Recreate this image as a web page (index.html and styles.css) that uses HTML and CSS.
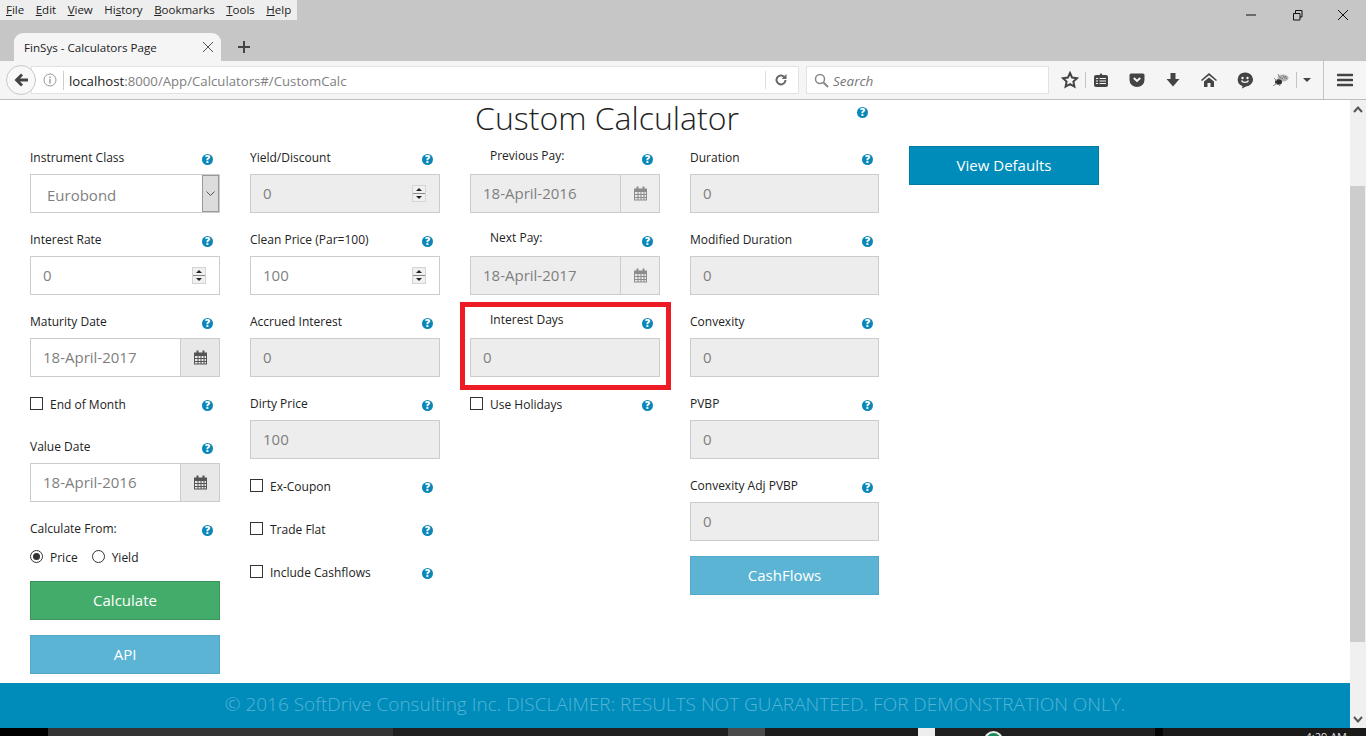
FILE: index.html
```html
<!DOCTYPE html>
<html lang="en">
<head>
    <meta charset="UTF-8">
    <title>FinSys - Calculators Page</title>
    <link rel="stylesheet" href="styles.css">
</head>
<body>
    <div class="browser">
        <div class="titlebar">
            <ul class="menubar">
                <li><u>F</u>ile</li>
                <li><u>E</u>dit</li>
                <li><u>V</u>iew</li>
                <li>Hi<u>s</u>tory</li>
                <li><u>B</u>ookmarks</li>
                <li><u>T</u>ools</li>
                <li><u>H</u>elp</li>
            </ul>
            <div class="winctl">
                <svg width="14" height="14" viewBox="0 0 14 14"><path d="M2 7h10" stroke="#111" fill="none"/></svg>
                <svg width="14" height="14" viewBox="0 0 14 14"><path d="M3.500 5.500h6.500v6.500h-6.500zM5.500 5v-2.500h6.500v6.500h-2" stroke="#111" fill="none"/></svg>
                <svg width="14" height="14" viewBox="0 0 14 14"><path d="M2 2l10 10M12 2l-10 10" stroke="#111" fill="none"/></svg>
            </div>
        </div>
        <div class="tabstrip">
            <div class="tab">
                <span class="tab-title">FinSys - Calculators Page</span>
                <svg width="12" height="12" viewBox="0 0 12 12"><path d="M1 1l10 10M11 1l-10 10" stroke="#555" fill="none"/></svg>
            </div>
            <svg class="newtab" width="14" height="14" viewBox="0 0 14 14"><path d="M7 1v12M1 7h12" stroke="#444" stroke-width="2" fill="none"/></svg>
        </div>
        <div class="navbar">
            <div class="backbtn">
                <svg width="16" height="16" viewBox="0 0 16 16"><path d="M8 1.500l-6.500 6.500 6.500 6.500 2-2-3-3h8v-3h-8l3-3z" fill="#444"/></svg>
            </div>
            <div class="urlbar">
                <svg class="infoicon" width="14" height="14" viewBox="0 0 14 14"><circle cx="7" cy="7" r="6" stroke="#999" fill="none"/><path d="M7 6v4.500M7 3.500v1.500" stroke="#999" stroke-width="1.400"/></svg>
                <span class="url"><span class="url-host">localhost</span>:8000/App/Calculators#/CustomCalc</span>
                <span class="url-sep"></span>
                <svg class="reload" width="14" height="14" viewBox="0 0 14 14"><path d="M11.500 7a4.500 4.500 0 1 1-1.400-3.300" stroke="#666" stroke-width="2" fill="none"/><path d="M12.500 1v5h-5z" fill="#666"/></svg>
            </div>
            <div class="searchbar">
                <svg width="15" height="15" viewBox="0 0 15 15"><circle cx="6" cy="6" r="4.500" stroke="#888" stroke-width="1.500" fill="none"/><path d="M9.500 9.500l4.500 4.500" stroke="#888" stroke-width="2"/></svg>
                <span>Search</span>
            </div>
            <div class="tools">
                <svg class="t-star" width="18" height="18" viewBox="0 0 18 18"><path d="M9 2l2.100 4.600 5 .6-3.700 3.400 1 5-4.400-2.500-4.400 2.500 1-5-3.700-3.400 5-.6z" stroke="#444" stroke-width="2" fill="none"/></svg>
                <span class="t-sep"></span>
                <svg class="t-list" width="16" height="16" viewBox="0 0 16 16"><path d="M3 3h3.500l1.500-2 1.500 2h3.500a2 2 0 0 1 2 2v8a2 2 0 0 1-2 2h-10a2 2 0 0 1-2-2v-8a2 2 0 0 1 2-2z" fill="#444"/><path d="M3 6.500h2M6.500 6.500h6.500M3 9h2M6.500 9h6.500M3 11.500h2M6.500 11.500h6.500" stroke="#f5f5f5" stroke-width="1.200"/></svg>
                <svg class="t-pocket" width="16" height="16" viewBox="0 0 16 16"><path d="M2 1.500h12a1.500 1.500 0 0 1 1.500 1.500v5a7.500 7 0 0 1-15 0v-5a1.500 1.500 0 0 1 1.500-1.500z" fill="#444"/><path d="M4.800 6l3.200 3 3.200-3" stroke="#f5f5f5" stroke-width="2" fill="none"/></svg>
                <svg class="t-down" width="16" height="16" viewBox="0 0 16 16"><path d="M5.500 1h5v6h4l-6.500 7.500-6.500-7.500h4z" fill="#444"/></svg>
                <svg class="t-home" width="16" height="16" viewBox="0 0 16 16"><path d="M8 1l8 7-1 1-7-5.700-7 5.700-1-1z" fill="#444"/><path d="M3 9.500l5-4 5 4v5.500h-3.500v-4h-3v4h-3.500z" fill="#444"/></svg>
                <svg class="t-smile" width="16" height="17" viewBox="0 0 16 17"><path d="M8 .5a7.500 7 0 0 1 1 14l-4 2 .5-2.500a7.500 7 0 0 1 2.500-13.500z" fill="#444"/><circle cx="5.500" cy="6" r="1.200" fill="#f5f5f5"/><circle cx="10.500" cy="6" r="1.200" fill="#f5f5f5"/><path d="M4.500 8.500c1 2.500 6 2.500 7 0" stroke="#f5f5f5" stroke-width="1.400" fill="none"/></svg>
                <svg class="t-bug" width="18" height="16" viewBox="0 0 18 16"><ellipse cx="11" cy="6" rx="5.500" ry="3.500" fill="#b5b5b5"/><path d="M8 5l3 2M11 3.500l2 3M13.500 4l1 3" stroke="#777" fill="none"/><ellipse cx="6.500" cy="10" rx="3.500" ry="2.800" fill="#2f2f2f"/><path d="M1 14l4-3M2 6l3 3M8 14l-1-2M6 2l2 4" stroke="#888" fill="none"/></svg>
                <span class="t-sep t-sep-b"></span>
                <svg class="t-caret" width="8" height="4" viewBox="0 0 8 4"><path d="M0 0h8l-4 4z" fill="#444"/></svg>
                <span class="t-sep t-sep-c"></span>
                <svg class="t-menu" width="16" height="14" viewBox="0 0 16 14"><path d="M1 2h14M1 7h14M1 12h14" stroke="#444" stroke-width="2.600" stroke-linecap="round"/></svg>
            </div>
        </div>
    </div>

    <div class="viewport">
        <div class="page">
            <div class="heading">
                <h1>Custom Calculator</h1>
                <span class="help help-title">?</span>
            </div>
            <div class="calc-grid">
                <div class="calc-col">
                    <div class="field">
                        <div class="field-label"><label>Instrument Class</label><span class="help">?</span></div>
                        <div class="select">
                            <span class="select-value">Eurobond</span>
                            <span class="select-btn"><svg width="9" height="5" viewBox="0 0 9 5"><path d="M.5 .5l4 4 4-4" stroke="#555" fill="none"/></svg></span>
                        </div>
                    </div>
                    <div class="field">
                        <div class="field-label"><label>Interest Rate</label><span class="help">?</span></div>
                        <div class="input"><span>0</span><span class="spin"><i class="spin-up"></i><i class="spin-down"></i></span></div>
                    </div>
                    <div class="field">
                        <div class="field-label"><label>Maturity Date</label><span class="help">?</span></div>
                        <div class="date">
                            <div class="date-value">18-April-2017</div>
                            <div class="date-btn"><svg class="cal" width="15" height="15" viewBox="0 0 15 15"><use href="#cal"/></svg></div>
                        </div>
                    </div>
                    <div class="check-row"><span class="box"></span><label>End of Month</label><span class="help">?</span></div>
                    <div class="field">
                        <div class="field-label"><label>Value Date</label><span class="help">?</span></div>
                        <div class="date">
                            <div class="date-value">18-April-2016</div>
                            <div class="date-btn"><svg class="cal" width="15" height="15" viewBox="0 0 15 15"><use href="#cal"/></svg></div>
                        </div>
                    </div>
                    <div class="field-label"><label>Calculate From:</label><span class="help">?</span></div>
                    <div class="radio-row">
                        <span class="radio radio-on"></span><label>Price</label>
                        <span class="radio"></span><label>Yield</label>
                    </div>
                    <div class="btn btn-green">Calculate</div>
                    <div class="btn btn-info">API</div>
                </div>

                <div class="calc-col">
                    <div class="field">
                        <div class="field-label"><label>Yield/Discount</label><span class="help">?</span></div>
                        <div class="input input-off"><span>0</span><span class="spin"><i class="spin-up"></i><i class="spin-down"></i></span></div>
                    </div>
                    <div class="field">
                        <div class="field-label"><label>Clean Price (Par=100)</label><span class="help">?</span></div>
                        <div class="input"><span>100</span><span class="spin"><i class="spin-up"></i><i class="spin-down"></i></span></div>
                    </div>
                    <div class="field">
                        <div class="field-label"><label>Accrued Interest</label><span class="help">?</span></div>
                        <div class="input input-off"><span>0</span></div>
                    </div>
                    <div class="field">
                        <div class="field-label"><label>Dirty Price</label><span class="help">?</span></div>
                        <div class="input input-off"><span>100</span></div>
                    </div>
                    <div class="check-row"><span class="box"></span><label>Ex-Coupon</label><span class="help">?</span></div>
                    <div class="check-row"><span class="box"></span><label>Trade Flat</label><span class="help">?</span></div>
                    <div class="check-row"><span class="box"></span><label>Include Cashflows</label><span class="help">?</span></div>
                </div>

                <div class="calc-col">
                    <div class="field">
                        <div class="field-label field-label-in"><label>Previous Pay:</label><span class="help">?</span></div>
                        <div class="date date-off">
                            <div class="date-value">18-April-2016</div>
                            <div class="date-btn"><svg class="cal" width="15" height="15" viewBox="0 0 15 15"><use href="#cal"/></svg></div>
                        </div>
                    </div>
                    <div class="field">
                        <div class="field-label field-label-in"><label>Next Pay:</label><span class="help">?</span></div>
                        <div class="date date-off">
                            <div class="date-value">18-April-2017</div>
                            <div class="date-btn"><svg class="cal" width="15" height="15" viewBox="0 0 15 15"><use href="#cal"/></svg></div>
                        </div>
                    </div>
                    <div class="field field-marked">
                        <div class="field-label field-label-in"><label>Interest Days</label><span class="help">?</span></div>
                        <div class="input input-off"><span>0</span></div>
                        <div class="marker"></div>
                    </div>
                    <div class="check-row"><span class="box"></span><label>Use Holidays</label><span class="help">?</span></div>
                </div>

                <div class="calc-col calc-col-narrow">
                    <div class="field">
                        <div class="field-label"><label>Duration</label><span class="help">?</span></div>
                        <div class="input input-off"><span>0</span></div>
                    </div>
                    <div class="field">
                        <div class="field-label"><label>Modified Duration</label><span class="help">?</span></div>
                        <div class="input input-off"><span>0</span></div>
                    </div>
                    <div class="field">
                        <div class="field-label"><label>Convexity</label><span class="help">?</span></div>
                        <div class="input input-off"><span>0</span></div>
                    </div>
                    <div class="field">
                        <div class="field-label"><label>PVBP</label><span class="help">?</span></div>
                        <div class="input input-off"><span>0</span></div>
                    </div>
                    <div class="field field-last">
                        <div class="field-label"><label>Convexity Adj PVBP</label><span class="help">?</span></div>
                        <div class="input input-off"><span>0</span></div>
                    </div>
                    <div class="btn btn-info">CashFlows</div>
                </div>

                <div class="calc-col">
                    <div class="btn btn-blue">View Defaults</div>
                </div>
            </div>
            <div class="footer">© 2016 SoftDrive Consulting Inc. DISCLAIMER: RESULTS NOT GUARANTEED. FOR DEMONSTRATION ONLY.</div>
        </div>
        <div class="scrollbar">
            <svg width="10" height="7" viewBox="0 0 10 7"><path d="M1 6l4-4.500 4 4.500" stroke="#555" stroke-width="2" fill="none"/></svg>
            <div class="scroll-thumb"></div>
            <svg width="10" height="7" viewBox="0 0 10 7"><path d="M1 1l4 4.500 4-4.500" stroke="#555" stroke-width="2" fill="none"/></svg>
        </div>
    </div>

    <div class="taskbar">
        <span class="task task-a"></span>
        <span class="task task-b"></span>
        <span class="task task-c"></span>
        <span class="task task-d"></span>
        <span class="task task-e"></span>
        <span class="task task-f"></span>
        <span class="task task-g"></span>
        <span class="task task-h"></span>
        <span class="task-dot"></span>
        <span class="task-time">4:29 AM</span>
    </div>

    <svg class="defs" width="0" height="0">
        <symbol id="cal" viewBox="0 0 15 15">
            <path d="M1 2.500h13v12h-13z" fill="currentColor"/>
            <path d="M2 6h2.500v2h-2.500zM5.500 6h2v2h-2zM8.500 6h2v2h-2zM11.500 6h1.500v2h-1.500zM2 9h2.500v2h-2.500zM5.500 9h2v2h-2zM8.500 9h2v2h-2zM11.500 9h1.500v2h-1.500zM2 12h2.500v1.500h-2.500zM5.500 12h2v1.500h-2zM8.500 12h2v1.500h-2zM11.500 12h1.500v1.500h-1.500z" fill="#e8e8e8"/>
            <path d="M3.500 .5h2v3h-2zM9.500 .5h2v3h-2z" fill="currentColor"/>
        </symbol>
    </svg>
</body>
</html>
```

FILE: styles.css
```css
* {
    box-sizing: border-box;
}
html, body {
    height: 100%;
}
body {
    margin: 0;
    height: 736px;
    overflow: hidden;
    font-family: "Open Sans", sans-serif;
    display: flex;
    flex-direction: column;
    background: #fff;
}

/* browser chrome */
.browser {
    flex: none;
}
.titlebar {
    height: 20px;
    background: #c6c6c6;
    display: flex;
    justify-content: space-between;
}
.menubar {
    list-style: none;
    margin: 0;
    padding: 0 3px 0 6px;
    width: 297px;
    background: #eeeeee;
    display: flex;
    gap: 11.5px;
    font-size: 11.5px;
    line-height: 20px;
    color: #222;
}
.winctl {
    display: flex;
    gap: 32px;
    padding: 8px 16px 0 0;
}
.tabstrip {
    height: 41px;
    background: #c6c6c6;
    display: flex;
    align-items: flex-end;
    padding-left: 14px;
}
.tab {
    width: 207px;
    height: 28px;
    background: #f5f5f5;
    border-radius: 9px 9px 0 0;
    padding: 0 7px 0 10px;
    display: flex;
    align-items: center;
    justify-content: space-between;
    font-size: 11.6px;
    color: #222;
}
.newtab {
    margin: 0 0 7px 16px;
}
.navbar {
    height: 39px;
    background: #f5f5f5;
    border-bottom: 1px solid #bdbdbd;
    display: flex;
    align-items: center;
    padding: 0 0 0 6px;
}
.backbtn {
    width: 30px;
    height: 30px;
    border: 1px solid #c8c8c8;
    border-radius: 50%;
    background: #f8f8f8;
    display: flex;
    align-items: center;
    justify-content: center;
    position: relative;
    z-index: 1;
}
.urlbar {
    width: 768px;
    height: 28px;
    margin-left: -5px;
    background: #fff;
    border: 1px solid #e2e2e2;
    display: flex;
    align-items: center;
    font-size: 13.2px;
    color: #808080;
    padding-left: 11px;
}
.infoicon {
    flex: none;
}
.url {
    margin-left: 6px;
    padding: 1px 0 0 5px;
    border-left: 1px solid #ccc;
    line-height: 18px;
    flex: 1;
}
.url-host {
    color: #222;
}
.url-sep {
    width: 1px;
    height: 18px;
    background: #ddd;
    margin-right: 8px;
}
.reload {
    margin-right: 10px;
}
.searchbar {
    width: 243px;
    height: 28px;
    margin-left: 7px;
    background: #fff;
    border: 1px solid #e2e2e2;
    display: flex;
    align-items: center;
    gap: 4px;
    padding: 1px 0 0 7px;
    font-size: 13.5px;
    font-style: italic;
    color: #777;
}
.tools {
    flex: 1;
    display: flex;
    align-items: center;
    height: 100%;
    padding-left: 12px;
}
.t-sep {
    width: 1px;
    height: 16px;
    background: #c4c4c4;
    margin-left: 6px;
}
.t-list {
    margin-left: 7px;
}
.t-pocket, .t-down, .t-home, .t-smile {
    margin-left: 20px;
}
.t-bug {
    margin-left: 19px;
}
.t-sep-b {
    margin-left: 6px;
}
.t-caret {
    margin-left: 6px;
}
.t-sep-c {
    height: 100%;
    margin-left: 12px;
}
.t-menu {
    margin-left: 13px;
}

/* page */
.viewport {
    height: 628px;
    flex: none;
    display: flex;
}
.page {
    flex: 1;
    display: flex;
    flex-direction: column;
    min-width: 0;
}
.heading {
    height: 45px;
    flex: none;
    position: relative;
    text-align: center;
}
.heading h1 {
    margin: 0;
    padding: 0 136px 0 0;
    font-size: 32px;
    font-weight: 300;
    line-height: 36px;
    color: #222;
}
.help-title {
    position: absolute;
    left: 857px;
    top: 7px;
}
.calc-grid {
    flex: 1;
    display: grid;
    grid-template-columns: 190px 190px 190px 189px 190px;
    column-gap: 30px;
    padding-left: 30px;
}
.calc-col {
    min-width: 0;
}
.field {
    height: 82px;
    position: relative;
}
.field-last {
    height: 83px;
}
.field-label {
    height: 29px;
    padding-top: 4px;
    display: flex;
    justify-content: space-between;
    font-size: 12px;
    line-height: 18px;
    color: #222;
    padding-right: 7px;
}
.calc-col-narrow .field-label {
    padding-right: 6px;
}
.field-label-in {
    padding-left: 20px;
    padding-top: 2px;
}
.field-label .help {
    margin-top: 5px;
}
.field-label-in .help {
    margin-top: 7px;
}
.help {
    flex: none;
    width: 11px;
    height: 11px;
    border-radius: 50%;
    background: #0a87b8;
    color: #fff;
    font-size: 10px;
    font-weight: 800;
    line-height: 11px;
    text-align: center;
    display: inline-block;
}
.input {
    height: 39px;
    border: 1px solid #cccccc;
    background: #fff;
    display: flex;
    align-items: center;
    justify-content: space-between;
    padding: 0 13px 0 12px;
    font-size: 15px;
    color: #7f7f7f;
}
.input > span:first-child {
    margin-bottom: 2px;
}
.input-off {
    background: #ededed;
}
.spin {
    width: 14px;
    height: 17px;
    background: #f0f0f0;
    border: 1px solid #d4d4d4;
    display: flex;
    flex-direction: column;
    align-items: center;
    justify-content: space-between;
    padding: 2px 0;
    position: relative;
}
.spin::after {
    content: "";
    position: absolute;
    left: 0;
    right: 0;
    top: 7px;
    height: 1px;
    background: #8a8a8a;
}
.spin-up {
    border: 3px solid transparent;
    border-top: 0;
    border-bottom: 3px solid #222;
}
.spin-down {
    border: 3px solid transparent;
    border-bottom: 0;
    border-top: 3px solid #222;
}
.select {
    height: 39px;
    border: 1px solid #cccccc;
    background: #fff;
    display: flex;
    align-items: center;
    justify-content: space-between;
    font-size: 15px;
    color: #7f7f7f;
    padding: 0 0 0 16px;
}
.select-value {
    padding-top: 3px;
}
.select-btn {
    width: 17px;
    height: 37px;
    background: #dcdcdc;
    border: 1px solid #999;
    display: flex;
    align-items: center;
    justify-content: center;
}
.date {
    height: 39px;
    display: flex;
}
.date-value {
    flex: 1;
    border: 1px solid #cccccc;
    border-right: 0;
    background: #fff;
    padding-left: 12px;
    font-size: 15px;
    line-height: 36px;
    color: #7f7f7f;
}
.date-off .date-value {
    background: #ededed;
}
.date-btn {
    width: 40px;
    border: 1px solid #cccccc;
    background: #e8e8e8;
    display: flex;
    align-items: center;
    justify-content: center;
    color: #555;
}
.date-off .date-btn {
    background: #eeeeee;
    color: #8c8c8c;
}
.check-row {
    height: 43px;
    padding: 5px 7px 0 0;
    display: flex;
    align-items: flex-start;
    font-size: 12px;
    line-height: 18px;
    color: #222;
}
.check-row label {
    flex: 1;
    margin-left: 7px;
}
.check-row .help {
    margin-top: 4px;
}
.box {
    width: 13px;
    height: 13px;
    margin-top: 1px;
    border: 1px solid #333;
    background: #fff;
}
.radio-row {
    height: 36px;
    padding-top: 4px;
    display: flex;
    align-items: flex-start;
    font-size: 12px;
    line-height: 18px;
    color: #222;
}
.radio-row label {
    margin: 0 14px 0 7px;
}
.radio {
    width: 13px;
    height: 13px;
    margin-top: 1px;
    border: 1px solid #333;
    border-radius: 50%;
    background: #fff;
    position: relative;
}
.radio-on::after {
    content: "";
    position: absolute;
    left: 2px;
    top: 2px;
    width: 7px;
    height: 7px;
    border-radius: 50%;
    background: #333;
}
.btn {
    height: 39px;
    margin-bottom: 15px;
    color: #fff;
    font-size: 15px;
    line-height: 37px;
    text-align: center;
    border: 1px solid transparent;
}
.calc-col .btn:last-child {
    margin-bottom: 0;
}
.btn-green {
    background: #43ac6a;
    border-color: #3a945b;
}
.btn-info {
    background: #5bb4d3;
    border-color: #51a8c7;
}
.btn-blue {
    background: #008cba;
    border-color: #007ba4;
    margin-top: 1px;
}
/* red box drawn over the screenshot */
.marker {
    position: absolute;
    left: -10px;
    top: -7px;
    width: 211px;
    height: 88px;
    border: 5px solid #ed1c24;
    pointer-events: none;
}
.footer {
    height: 45px;
    flex: none;
    background: #008cba;
    color: #55b4d6;
    font-size: 19px;
    font-weight: 300;
    line-height: 42px;
    text-align: center;
    white-space: nowrap;
}
.scrollbar {
    width: 16px;
    flex: none;
    background: #f0f0f0;
    display: flex;
    flex-direction: column;
    align-items: center;
    justify-content: space-between;
    padding: 6px 0 5px;
    position: relative;
}
.scroll-thumb {
    position: absolute;
    left: 0;
    top: 86px;
    width: 15px;
    height: 456px;
    background: #cdcdcd;
}

/* windows taskbar, mostly cut off */
.taskbar {
    flex: 1;
    background: #1a1a1a;
    display: flex;
    overflow: hidden;
    position: relative;
}
.task {
    height: 100%;
    flex: none;
}
.task-a {
    width: 48px;
    background: #000;
}
.task-b {
    width: 345px;
    background: #333;
}
.task-c {
    width: 335px;
    background: #202020;
}
.task-d {
    width: 37px;
    background: #4a4a4a;
}
.task-e {
    width: 153px;
    background: #1c1c1c;
}
.task-f {
    width: 17px;
    background: #eeeeee;
}
.task-g {
    width: 220px;
    background: #202020;
}
.task-h {
    width: 8px;
    background: #050505;
}
.task-dot {
    position: absolute;
    left: 984px;
    top: 3px;
    width: 19px;
    height: 19px;
    border-radius: 50%;
    border: 2px solid #eee;
    background: #1d8a5a;
}
.task-time {
    position: absolute;
    right: 19px;
    top: 2px;
    font-size: 11px;
    color: #ddd;
    line-height: 14px;
}
.defs {
    position: absolute;
}
```
